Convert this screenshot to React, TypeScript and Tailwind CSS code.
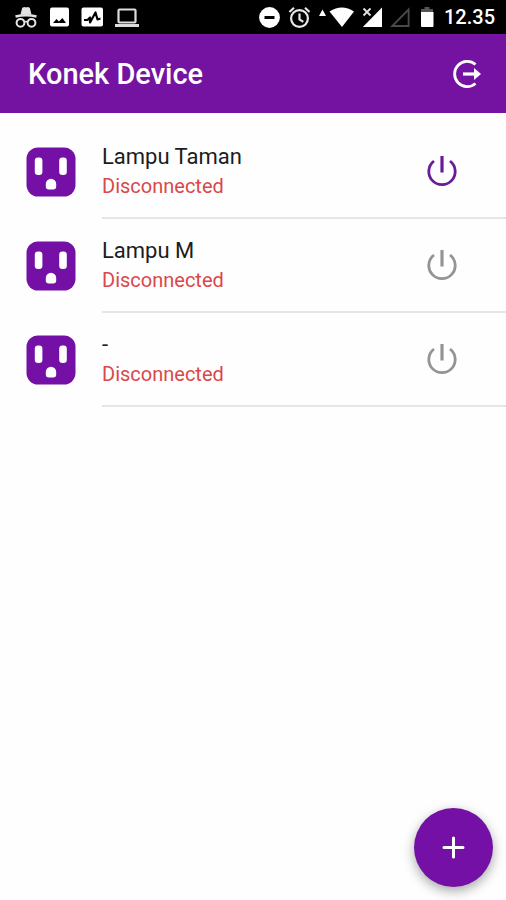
type Device = { id: number; name: string; status: string; on: boolean };

const devices: Device[] = [
  { id: 1, name: "Lampu Taman", status: "Disconnected", on: true },
  { id: 2, name: "Lampu M", status: "Disconnected", on: false },
  { id: 3, name: "-", status: "Disconnected", on: false },
];

function StatusBar() {
  return (
    <div className="flex h-[34px] items-center justify-between bg-black pl-[15px] pr-[11px] text-white">
      <div className="flex items-center gap-3">
        {/* incognito */}
        <svg width="22" height="22" viewBox="0 0 22 22" fill="none" stroke="#e4e4e4">
          <path d="M5.5 8.5 7.2 1.8 9.5 1 11 1.6 12.5 1 14.8 1.8 16.5 8.5z" fill="#e4e4e4" stroke="none" />
          <path d="M.5 10.5Q11 8 21.5 10.5" strokeWidth="2.4" />
          <circle cx="5.5" cy="16.8" r="3.9" strokeWidth="2" />
          <circle cx="16.5" cy="16.8" r="3.9" strokeWidth="2" />
          <path d="M9 16.2q2-1.4 4 0" strokeWidth="1.6" />
        </svg>
        {/* picture */}
        <svg width="20" height="22" viewBox="0 0 20 22">
          <rect x="1" y="1.5" width="19" height="19" rx="2" fill="#fff" />
          <path d="M4 17 7.5 13 10 15.4 13.4 12 17 17z" fill="#000" />
        </svg>
        {/* activity */}
        <svg width="22" height="22" viewBox="0 0 22 22">
          <rect x="0.5" y="1.5" width="21.5" height="19" rx="2" fill="#fff" />
          <path
            d="M3 14h3.5l2.5-2.500v5L14.500 6.500l2 7 3-1"
            fill="none"
            stroke="#000"
            strokeWidth="2.2"
            strokeLinejoin="round"
          />
        </svg>
        {/* laptop */}
        <svg width="24" height="22" viewBox="0 0 24 22" fill="none" stroke="#dcdcdc">
          <rect x="3.5" y="3.5" width="17" height="13" rx="1" strokeWidth="2.2" />
          <path d="M0 19.500h24" strokeWidth="3" />
        </svg>
      </div>

      <div className="flex items-center gap-2">
        {/* do not disturb */}
        <svg width="22" height="22" viewBox="0 0 22 22">
          <circle cx="11.5" cy="11.5" r="10.4" fill="#fff" />
          <path d="M6.5 11.5h10" stroke="#000" strokeWidth="3" />
        </svg>
        {/* alarm */}
        <svg width="22" height="22" viewBox="0 0 22 22" fill="none" stroke="#e8e8e8" strokeWidth="2.2">
          <circle cx="11.5" cy="12.5" r="8.4" />
          <path d="M11.5 7.5v6l3.8 2.4M1.4 6 6 1.8M21.6 6 17 1.8" />
        </svg>
        {/* wifi */}
        <svg width="36" height="22" viewBox="0 0 36 22" fill="#fff">
          <path d="M4.5 3.5 8 10H1z" />
          <path d="M11.5 5.4Q24 -2.5 36 5.4L24 21z" />
        </svg>
        {/* signal, no data */}
        <svg width="20" height="22" viewBox="0 0 20 22">
          <path d="M20 1.5V21H.8z" fill="#fff" />
          <path d="M0 0h10v11H0z" fill="#000" />
          <path d="M1.5 2.5 8.5 9.5M8.5 2.5 1.5 9.5" stroke="#e4e4e4" strokeWidth="1.8" />
        </svg>
        {/* empty signal */}
        <svg width="20" height="22" viewBox="0 0 20 22" fill="none" stroke="#4a4a4a" strokeWidth="1.8">
          <path d="M18.6 3.5V20H2.2z" />
        </svg>
        {/* battery */}
        <svg width="18" height="22" viewBox="0 0 18 22">
          <path d="M6.5 1h5v2H15v3H3V3h3.5z" fill="#555" />
          <path d="M3 6h12.5v14a1 1 0 0 1-1 1H4a1 1 0 0 1-1-1z" fill="#fff" />
        </svg>
        <span className="text-[20px] leading-6 font-medium">12.35</span>
      </div>
    </div>
  );
}

function OutletIcon() {
  return (
    <svg width="50" height="50" viewBox="0 0 50 50" className="shrink-0">
      <rect x="0.5" y="0.5" width="49" height="49" rx="11.5" fill="#7410a6" />
      <rect x="8.8" y="10.5" width="7.6" height="17.5" rx="3.2" fill="#fff" />
      <rect x="33.2" y="10.5" width="7.6" height="17.5" rx="3.2" fill="#fff" />
      <path d="M19.8 37a5.2 5.2 0 0 1 10.4 0v2.5a3 3 0 0 1-3 3h-4.400a3 3 0 0 1-3-3z" fill="#fff" />
    </svg>
  );
}

function PowerIcon() {
  return (
    <svg width="32" height="32" viewBox="0 0 32 32" fill="none" stroke="currentColor" strokeWidth="2.8">
      <path d="M16 1V17.5" strokeWidth="3.2" />
      <path d="M8 6A13.2 13.2 0 1 0 24 6" />
    </svg>
  );
}

function DeviceRow({ device }: { device: Device }) {
  return (
    <li className="flex items-center pl-[26px]">
      <OutletIcon />
      <div className="ml-[26px] flex flex-1 items-center justify-between border-b-2 border-[#e6e6e6] py-[17px] pr-12">
        <div>
          <p className="text-[22px] leading-[30px] text-[#1c1c1c]">{device.name}</p>
          <p className="text-[20px] leading-7 text-[#d9484a]">{device.status}</p>
        </div>
        <button
          type="button"
          aria-label={`Toggle ${device.name}`}
          aria-pressed={device.on}
          className={device.on ? "text-[#6a1b9a]" : "text-[#949494]"}
        >
          <PowerIcon />
        </button>
      </div>
    </li>
  );
}

export default function App() {
  return (
    <div className="flex min-h-screen flex-col bg-[#fefefe] font-['Roboto',sans-serif]">
      <StatusBar />
      <header className="flex h-[79px] items-center justify-between bg-[#7413a2] pr-6 pl-[28px] text-white">
        <h1 className="text-[29px] leading-8 font-medium">Konek Device</h1>
        <button type="button" aria-label="Log out">
          <svg width="30" height="30" viewBox="0 0 30 30" fill="none" stroke="currentColor" strokeWidth="2.8">
            <path d="M23.5 5.500A12.600 12.600 0 1 0 23.500 24.500" />
            <path d="M11 15h13" strokeWidth="3.2" />
            <path d="M22 9 29 15 22 21z" fill="currentColor" stroke="none" />
          </svg>
        </button>
      </header>

      <main className="flex-1 pt-3">
        <ul>
          {devices.map((device) => (
            <DeviceRow key={device.id} device={device} />
          ))}
        </ul>
      </main>

      <button
        type="button"
        aria-label="Add device"
        className="fixed right-[13px] bottom-[13px] flex size-[79px] items-center justify-center rounded-full bg-[#7410a6] text-white shadow-[0_4px_12px_rgba(0,0,0,0.35)]"
      >
        <svg width="23" height="23" viewBox="0 0 23 23" stroke="currentColor" strokeWidth="3" strokeLinecap="round">
          <path d="M11.5 2v19M2 11.5h19" />
        </svg>
      </button>
    </div>
  );
}
